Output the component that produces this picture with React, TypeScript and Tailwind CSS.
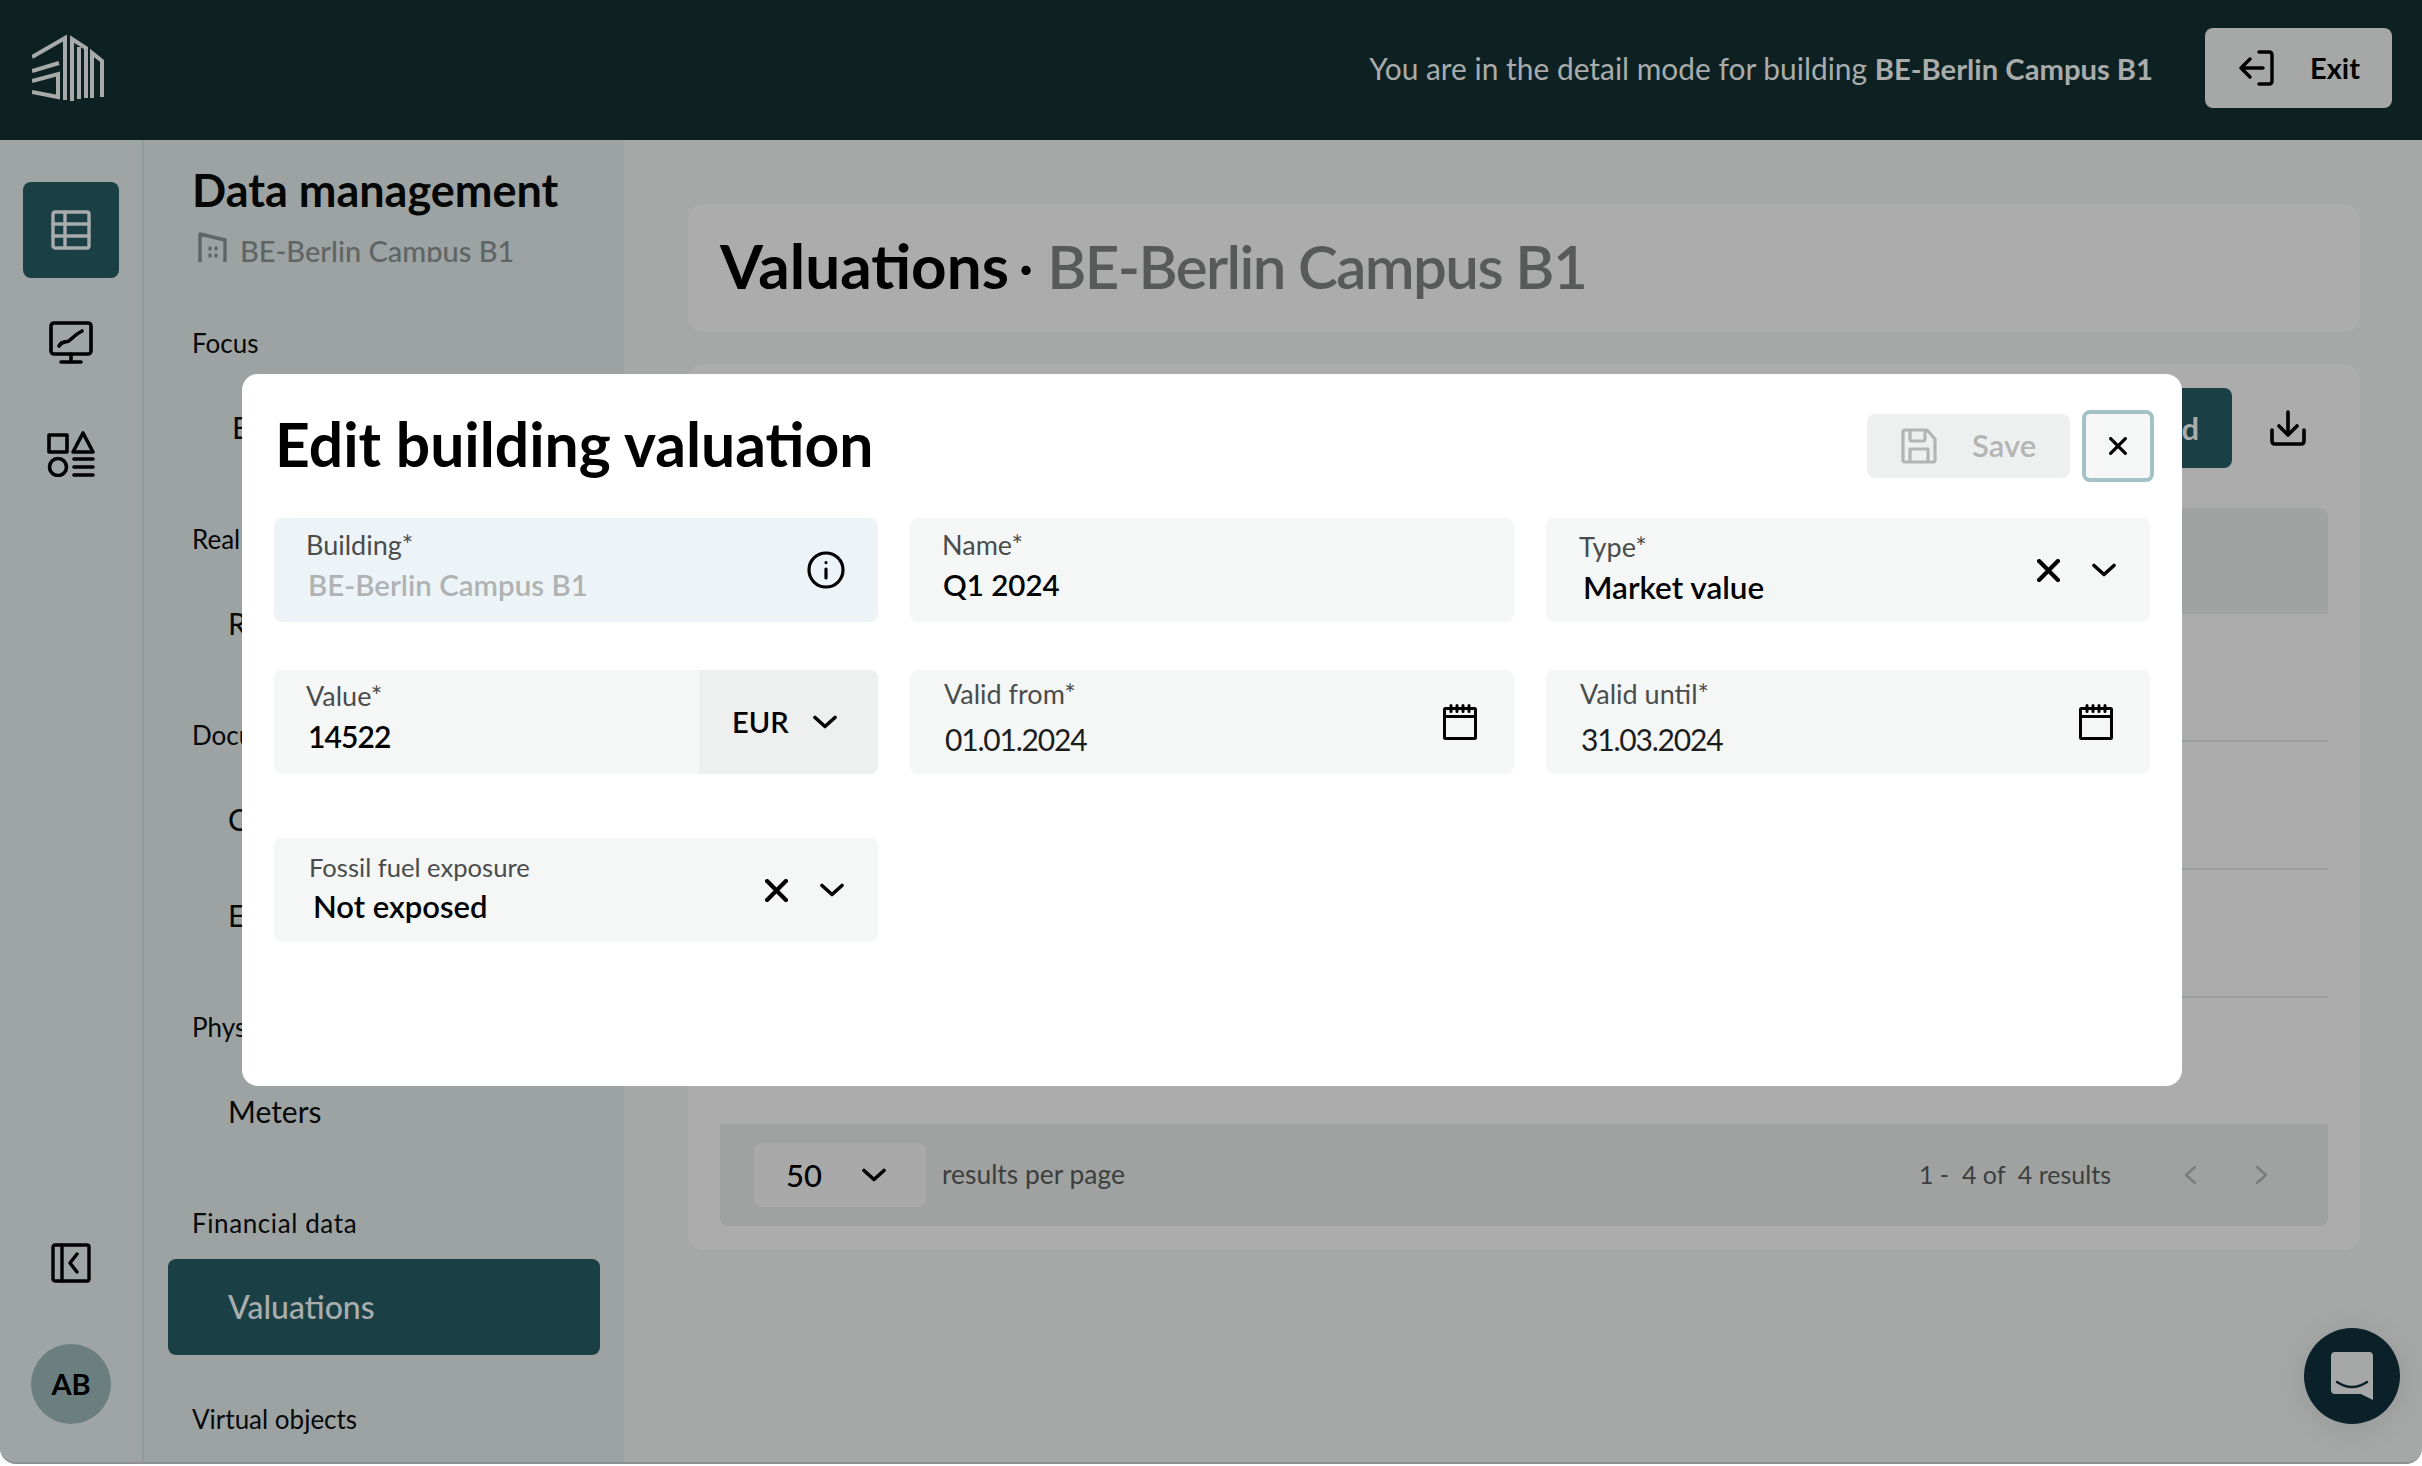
import React from "react";

const F = "[font-family:Lato,'Noto_Sans',sans-serif]";

function Ico({ className, children, vb = "0 0 24 24", sw = 2 }: { className: string; children: React.ReactNode; vb?: string; sw?: number }) {
  return (
    <svg viewBox={vb} fill="none" stroke="currentColor" strokeWidth={sw} strokeLinecap="round" strokeLinejoin="round" className={className}>
      {children}
    </svg>
  );
}

const Chevron = ({ className }: { className: string }) => (
  <Ico className={className} vb="0 0 24 14" sw={3.6}>
    <path d="M2 2.5 L12 11.5 L22 2.5" />
  </Ico>
);
const Cross = ({ className }: { className: string }) => (
  <Ico className={className} vb="0 0 22 22" sw={4}>
    <path d="M2 2 L20 20 M20 2 L2 20" />
  </Ico>
);
const Calendar = () => (
  <Ico className="w-[34px] h-[36px] text-black shrink-0" vb="0 0 34 36" sw={3}>
    <rect x="1.5" y="4.5" width="31" height="30" rx="1" />
    <path d="M1.5 12.5 H32.5 M8 1.5 V7.5 M14 1.5 V7.5 M20 1.5 V7.5 M26 1.5 V7.5" />
  </Ico>
);

function Logo() {
  return (
    <svg viewBox="0 0 72 67" fill="none" stroke="#a8aaa9" strokeWidth={4} strokeLinejoin="miter" className="w-[72px] h-[67px]">
      <path d="M0 22 L33 3 V65" />
      <path d="M0 36 L27 28" />
      <path d="M0 46 L26 39 V62 L0 57" />
      <path d="M40 66 V4 L54 13 V63" />
      <path d="M47 64 V12" />
      <path d="M60 63 V18 L70 26 V62" />
    </svg>
  );
}

function Label({ children }: { children: React.ReactNode }) {
  return <div className="h-[36px] leading-[36px] text-[26px] text-[#070808] mb-[18px] whitespace-nowrap -ml-[1px]">{children}</div>;
}

function NavItem({ children, active }: { children: React.ReactNode; active?: boolean }) {
  return (
    <div
      className={
        active
          ? "h-[96px] ml-[-25px] mr-[24px] pl-[60px] rounded-lg bg-[#1a3f45] text-[#a9adad] flex items-center text-[32px] font-medium"
          : "h-[96px] ml-[-25px] mr-[24px] pl-[60px] text-[#070808] flex items-center text-[30px]"
      }
    >
      {children}
    </div>
  );
}

function Field({
  label,
  value,
  bg = "bg-[#f5f7f6]",
  pos,
  valuePos,
  labelCls = "text-[27px]",
  valueCls = "text-black font-semibold text-[31px]",
  right,
}: {
  label: string;
  value: string;
  bg?: string;
  pos: string;
  labelCls?: string;
  valuePos: string;
  valueCls?: string;
  right?: React.ReactNode;
}) {
  return (
    <div className={`h-[104px] rounded-lg flex items-stretch overflow-hidden ${bg}`}>
      <div className={`flex-1 min-w-0 ${pos}`}>
        <div className={`h-[36px] leading-[36px] text-[#4a4c4c] whitespace-nowrap ${labelCls}`}>{label}</div>
        <div className={`h-[40px] leading-[40px] whitespace-nowrap ${valueCls} ${valuePos}`}>{value}</div>
      </div>
      {right}
    </div>
  );
}

export default function App() {
  return (
    <div className={`relative h-screen w-full bg-white overflow-hidden ${F}`}>
      <div className="h-[1464px] rounded-b-[16px] overflow-hidden border-b-2 border-[#8d9090] flex flex-col bg-[#a6a8a7]">
        <header className="h-[140px] shrink-0 bg-[#0d2123] flex items-center justify-between pl-[32px] pr-[30px] pb-[4px]">
          <Logo />
          <div className="flex items-center gap-[52px]">
            <p className="text-[29.9px] text-[#a9acab]">
              You are in the detail mode for building <span className="font-bold text-[29.2px]">BE-Berlin Campus B1</span>
            </p>
            <button className="w-[187px] h-[80px] rounded-lg bg-[#a6a8a7] flex items-center pl-[34px] gap-[35px] text-black">
              <Ico className="w-[36px] h-[36px]" vb="0 0 36 36" sw={3.4}>
                <path d="M20 2 H30 Q33 2 33 5 V31 Q33 34 30 34 H20 M24 18 H2 M11 9 L2 18 L11 27" />
              </Ico>
              <span className="text-[29px] font-bold">Exit</span>
            </button>
          </div>
        </header>

        <div className="flex-1 flex min-h-0">
          <aside className="w-[144px] shrink-0 bg-[#9fa5a5] border-r-2 border-[#8f9b9c] flex flex-col items-center pt-[42px] pb-[38px]">
            <div className="flex flex-col items-center gap-[16px]">
              <div className="w-[96px] h-[96px] rounded-lg bg-[#1a3f45] flex items-center justify-center text-[#a9acac]">
                <Ico className="w-[40px] h-[40px]" vb="0 0 40 40" sw={3.4}>
                  <rect x="2" y="2" width="36" height="36" rx="2" />
                  <path d="M2 14 H38 M2 26 H38 M14 2 V38" />
                </Ico>
              </div>
              <div className="w-[96px] h-[96px] flex items-center justify-center text-black">
                <Ico className="w-[44px] h-[43px]" vb="0 0 44 43" sw={3.6}>
                  <rect x="2" y="2" width="40" height="31" rx="3" />
                  <path d="M10 25 C14 18 17 23 21 19 C25 15 27 13 33 10 M22 33 V41 M12 41 H32" />
                </Ico>
              </div>
              <div className="w-[96px] h-[96px] flex items-center justify-center text-black">
                <Ico className="w-[48px] h-[46px]" vb="0 0 48 46" sw={3.6}>
                  <rect x="2" y="4" width="18" height="17" />
                  <path d="M36 2 L46 21 H26 Z" />
                  <circle cx="11" cy="36" r="8.5" />
                  <path d="M27 28 H46 M27 36 H46 M27 44 H46" />
                </Ico>
              </div>
            </div>
            <Ico className="w-[40px] h-[40px] mt-auto text-black" vb="0 0 40 40" sw={3.4}>
              <rect x="2" y="2" width="36" height="36" rx="2" />
              <path d="M11 2 V38 M26 11 L19 20 L26 29" />
            </Ico>
            <div className="mt-[61px] w-[80px] h-[80px] rounded-full bg-[#6b7f81] flex items-center justify-center text-[29px] font-bold text-black">AB</div>
          </aside>

          <nav className="w-[480px] shrink-0 bg-[#9da3a3] pl-[49px] overflow-hidden">
            <h2 className="mt-[27px] h-[46px] leading-[46px] text-[45px] font-bold text-[#050606] whitespace-nowrap -ml-[1px]">Data management</h2>
            <div className="mt-[19px] h-[30px] overflow-hidden flex items-start pl-[5px] gap-[13px] text-[#5f6565]">
              <Ico className="w-[29px] h-[40px] shrink-0" vb="0 0 29 40" sw={3.4}>
                <path d="M2 40 V2 L27 8 V40 M12 16 V17 M18 16 V17 M12 23 V24 M18 23 V24" />
              </Ico>
              <span className="text-[29px] leading-[38px] whitespace-nowrap font-medium">BE-Berlin Campus B1</span>
            </div>
            <div className="mt-[63px] flex flex-col gap-[46px]">
              <section>
                <Label>Focus</Label>
                <NavItem>
                  <span className="ml-[4px]">Energy</span>
                </NavItem>
              </section>
              <section>
                <Label>Real estate</Label>
                <NavItem>Rental</NavItem>
              </section>
              <section>
                <Label>Documents</Label>
                <NavItem>Certificates</NavItem>
                <NavItem>Energy bills</NavItem>
              </section>
              <section>
                <Label>Physical data</Label>
                <NavItem>Meters</NavItem>
              </section>
              <section>
                <Label>
                  <span className="tracking-[0.6px]">Financial data</span>
                </Label>
                <NavItem active>Valuations</NavItem>
              </section>
              <section>
                <Label>Virtual objects</Label>
              </section>
            </div>
          </nav>

          <main className="flex-1 min-w-0 pl-[64px] pr-[62px] pt-[64px] flex flex-col gap-[32px]">
            <div className="h-[128px] shrink-0 rounded-[16px] bg-[#acacac] flex items-center pl-[32px] pb-[5px]">
              <h1 className="text-[62px] font-bold text-black whitespace-nowrap">
                Valuations <span className="font-normal -ml-[6px]">·</span>{" "}
                <span className="text-[#585a59] font-semibold text-[60px] tracking-[-1.6px] -ml-[2px]">BE-Berlin Campus B1</span>
              </h1>
            </div>
            <div className="h-[886px] shrink-0 rounded-[16px] bg-[#acacac] px-[32px] pt-[24px]">
              <div className="h-[80px] flex items-center justify-end gap-[38px] pr-[22px]">
                <button className="w-[232px] h-[80px] rounded-lg bg-[#1a3f45] text-[#a9acac] text-[31px] font-bold flex items-center justify-end pr-[33px]">Add</button>
                <Ico className="w-[36px] h-[36px] text-black" vb="0 0 36 36" sw={3.6}>
                  <path d="M18 2 V24 M9 16 L18 25 L27 16 M2 20 V31 Q2 34 5 34 H31 Q34 34 34 31 V20" />
                </Ico>
              </div>
              <div className="mt-[40px] h-[106px] rounded-t-lg bg-[#a0a3a2]" />
              <div className="h-[128px] border-b-2 border-[#9aa09f]" />
              <div className="h-[128px] border-b-2 border-[#9aa09f]" />
              <div className="h-[128px] border-b-2 border-[#9aa09f]" />
              <div className="h-[126px]" />
              <div className="h-[102px] rounded-b-lg bg-[#9fa2a1] flex items-center pl-[34px] pr-[59px]">
                <div className="w-[172px] h-[64px] rounded-lg bg-[#a9a9a9] flex items-center justify-between pl-[32px] pr-[40px]">
                  <span className="text-[31px] font-medium text-black">50</span>
                  <Chevron className="w-[24px] h-[14px] text-black" />
                </div>
                <span className="ml-[16px] text-[26.4px] text-[#3c3f3e]">results per page</span>
                <span className="ml-auto text-[25px] text-[#3c3f3e] whitespace-pre">1 -  4 of  4 results</span>
                <Ico className="ml-[72px] w-[14px] h-[20px] text-[#7b7d7c]" vb="0 0 14 20" sw={2.4}>
                  <path d="M12 2 L3 10 L12 18" />
                </Ico>
                <Ico className="ml-[58px] w-[14px] h-[20px] text-[#7b7d7c]" vb="0 0 14 20" sw={2.4}>
                  <path d="M2 2 L11 10 L2 18" />
                </Ico>
              </div>
            </div>
          </main>
        </div>
      </div>

      <div className="absolute left-[2304px] top-[1328px] w-[96px] h-[96px] rounded-full bg-[#0b2129] shadow-[0_4px_30px_rgba(0,0,0,0.1)] flex items-center justify-center">
        <svg viewBox="0 0 42 48" className="w-[42px] h-[48px]">
          <path d="M4 0 H38 Q42 0 42 4 V48 L30 42 H4 Q0 42 0 38 V4 Q0 0 4 0 Z" fill="#a6a8a7" />
          <path d="M6 30 Q21 40 36 30" fill="none" stroke="#0b2129" strokeWidth="2.4" strokeLinecap="round" />
        </svg>
      </div>

      <div className="absolute left-[242px] top-[374px] w-[1940px] h-[712px] rounded-[16px] bg-white px-[32px] pt-[36px]">
        <div className="h-[72px] flex items-center justify-between">
          <h2 className="pl-[1px] pb-[3px] text-[60.6px] font-bold text-black whitespace-nowrap">Edit building valuation</h2>
          <div className="flex items-center gap-[12px] -mr-[4px]">
            <button className="w-[203px] h-[64px] rounded-lg bg-[#eef0ef] flex items-center pl-[34px] gap-[35px] text-[#b2b5b4]">
              <Ico className="w-[36px] h-[36px]" vb="0 0 36 36" sw={3.2}>
                <path d="M2 4 Q2 2 4 2 H26 L34 11 V32 Q34 34 32 34 H4 Q2 34 2 32 Z M9 2 V11 Q9 13 11 13 H22 Q24 13 24 11 V2 M9 34 V21 H27 V34" />
              </Ico>
              <span className="text-[31px] font-semibold pb-[2px]">Save</span>
            </button>
            <button className="w-[72px] h-[72px] rounded-lg bg-[#f5f7f6] border-[4px] border-[#a3c2c5] flex items-center justify-center text-black">
              <Cross className="w-[18px] h-[18px]" />
            </button>
          </div>
        </div>

        <div className="mt-[36px] grid grid-cols-3 gap-x-[32px]">
          <Field
            label="Building*"
            value="BE-Berlin Campus B1"
            bg="bg-[#edf4f7]"
            pos="pl-[32px] pt-[9px]"
            valuePos="mt-[2px] pl-[2px]"
            valueCls="text-[#b0b3b3] font-semibold text-[29.5px]"
            right={
              <div className="pr-[33px] flex items-center">
                <Ico className="w-[38px] h-[38px] text-black" vb="0 0 38 38" sw={3.2}>
                  <circle cx="19" cy="19" r="17" />
                  <path d="M19 18 V27 M19 11.5 V11.6" />
                </Ico>
              </div>
            }
          />
          <Field label="Name*" value="Q1 2024" pos="pl-[32px] pt-[9px]" valuePos="mt-[2px] pl-[1px]" valueCls="text-black font-semibold text-[29.5px]" />
          <Field
            label="Type*"
            value="Market value"
            pos="pl-[33px] pt-[11px]"
            valuePos="mt-[2px] pl-[4px]"
            valueCls="text-black font-semibold text-[31.5px]"
            right={
              <div className="pr-[34px] flex items-center gap-[32px]">
                <Cross className="w-[23px] h-[23px] text-black" />
                <Chevron className="w-[24px] h-[14px] text-black" />
              </div>
            }
          />
        </div>

        <div className="mt-[48px] grid grid-cols-3 gap-x-[32px]">
          <Field
            label="Value*"
            value="14522"
            pos="pl-[32px] pt-[8px]"
            valuePos="mt-[2px] pl-[2px]"
            valueCls="text-black font-semibold text-[30px] tracking-[-0.9px]"
            right={
              <div className="w-[179px] bg-[#eef0ef] flex items-center pl-[33px] gap-[24px]">
                <span className="text-[29px] font-semibold text-black">EUR</span>
                <Chevron className="w-[24px] h-[14px] text-black" />
              </div>
            }
          />
          <Field
            label="Valid from*"
            value="01.01.2024"
            pos="pl-[34px] pt-[6px]"
            valuePos="mt-[7px] pl-[1px]"
            valueCls="text-[#1c1d1d] text-[30px] tracking-[-1.2px]"
            right={
              <div className="pr-[37px] flex items-center">
                <Calendar />
              </div>
            }
          />
          <Field
            label="Valid until*"
            value="31.03.2024"
            pos="pl-[34px] pt-[6px]"
            valuePos="mt-[7px] pl-[1px]"
            valueCls="text-[#1c1d1d] text-[30px] tracking-[-1.2px]"
            right={
              <div className="pr-[37px] flex items-center">
                <Calendar />
              </div>
            }
          />
        </div>

        <div className="mt-[64px] grid grid-cols-3 gap-x-[32px]">
          <Field
            label="Fossil fuel exposure"
            value="Not exposed"
            pos="pl-[35px] pt-[11px]"
            labelCls="text-[25.6px]"
            valuePos="mt-[1px] pl-[4px]"
            valueCls="text-black font-semibold text-[31px]"
            right={
              <div className="pr-[34px] flex items-center gap-[32px]">
                <Cross className="w-[23px] h-[23px] text-black" />
                <Chevron className="w-[24px] h-[14px] text-black" />
              </div>
            }
          />
        </div>
      </div>
    </div>
  );
}
